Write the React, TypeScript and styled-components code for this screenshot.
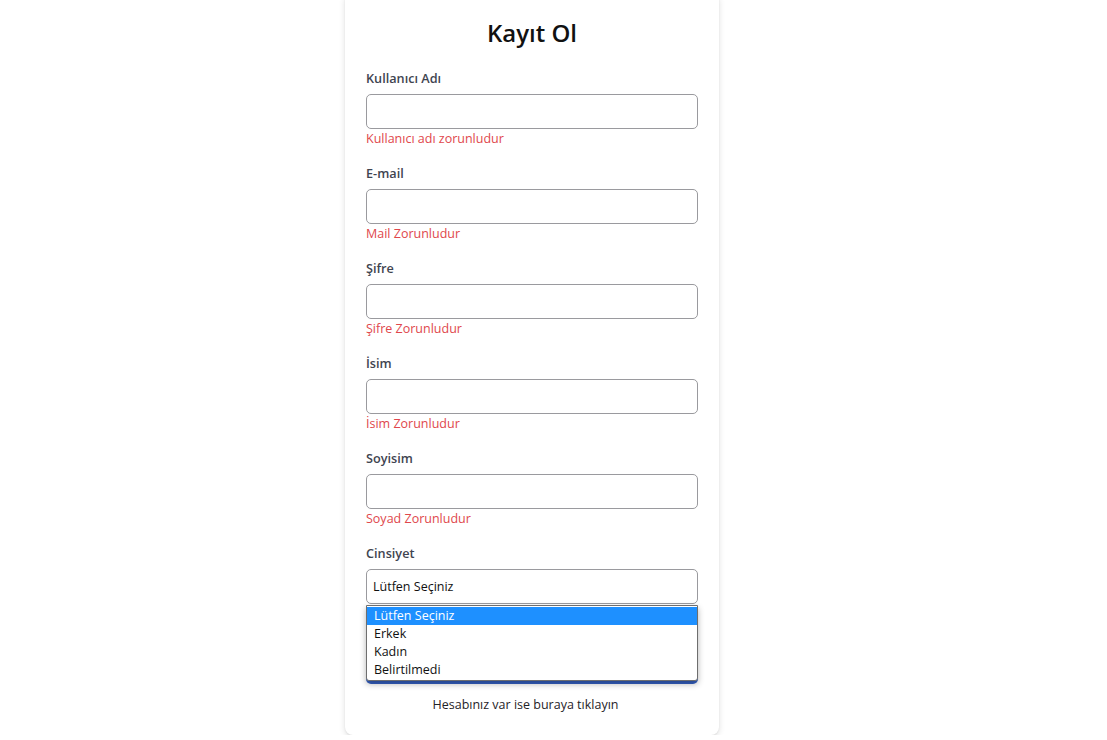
import React from 'react';
import styled, { createGlobalStyle } from 'styled-components';

const GlobalStyle = createGlobalStyle`
  html, body {
    margin: 0;
    padding: 0;
    background: #ffffff;
    font-family: 'Open Sans', 'Noto Sans', sans-serif;
  }
  * {
    box-sizing: border-box;
  }
`;

const fields = [
  { id: 'username', label: 'Kullanıcı Adı', error: 'Kullanıcı adı zorunludur', type: 'text' },
  { id: 'email', label: 'E-mail', error: 'Mail Zorunludur', type: 'email' },
  { id: 'password', label: 'Şifre', error: 'Şifre Zorunludur', type: 'password' },
  { id: 'name', label: 'İsim', error: 'İsim Zorunludur', type: 'text' },
  { id: 'surname', label: 'Soyisim', error: 'Soyad Zorunludur', type: 'text' },
];

const genders = ['Lütfen Seçiniz', 'Erkek', 'Kadın', 'Belirtilmedi'];

function App() {
  return (
    <Page>
      <GlobalStyle />
      <Card>
        <Title>Kayıt Ol</Title>
        {fields.map(f => (
          <Group key={f.id}>
            <Label htmlFor={f.id}>{f.label}</Label>
            <Input id={f.id} type={f.type} />
            <Error>{f.error}</Error>
          </Group>
        ))}
        <Group>
          <Label htmlFor='gender'>Cinsiyet</Label>
          <SelectWrap>
            <Select id='gender' defaultValue={genders[0]}>
              {genders.map(g => (
                <option key={g}>{g}</option>
              ))}
            </Select>
            <OptionList role='listbox'>
              {genders.map((g, i) => (
                <OptionItem key={g} $active={i === 0} role='option' aria-selected={i === 0}>
                  {g}
                </OptionItem>
              ))}
            </OptionList>
          </SelectWrap>
        </Group>
        <SubmitButton type='button'>Kayıt Ol</SubmitButton>
        <LoginLink>Hesabınız var ise buraya tıklayın</LoginLink>
      </Card>
    </Page>
  );
}

export default App;

const Page = styled.div`
  display: flex;
  justify-content: center;
  padding-right: 43px;
`;

const Card = styled.div`
  display: flex;
  flex-direction: column;
  width: 374px;
  margin-top: -7px;
  padding: 24px 21px 20px;
  background: #fff;
  border-radius: 8px;
  box-shadow: 0 2px 6px rgba(0, 0, 0, 0.13), 0 1px 2px rgba(0, 0, 0, 0.06);
`;

const Title = styled.h1`
  margin: 0 0 19px;
  font-size: 24px;
  line-height: 32px;
  font-weight: 600;
  color: #111;
  text-align: center;
`;

const Group = styled.div`
  display: flex;
  flex-direction: column;
  margin-bottom: 14px;
`;

const Label = styled.label`
  font-size: 12.7px;
  line-height: 20px;
  font-weight: 600;
  color: #3f4450;
  margin-bottom: 6px;
`;

const Input = styled.input`
  width: 100%;
  height: 35px;
  border: 1px solid #9a9a9e;
  border-radius: 5px;
  padding: 0 7px;
  font-family: inherit;
  font-size: 12.5px;
  outline: none;
`;

const Error = styled.span`
  font-size: 12.5px;
  line-height: 20px;
  color: #e0474c;
`;

const SelectWrap = styled.div`
  position: relative;
`;

const Select = styled.select`
  width: 100%;
  height: 35px;
  border: 1px solid #9a9a9e;
  border-radius: 5px;
  padding: 0 6px;
  font-family: inherit;
  font-size: 12.5px;
  color: #111;
  background: #fff;
  appearance: none;
  outline: none;
`;

const OptionList = styled.ul`
  position: absolute;
  left: 0;
  right: 0;
  top: 36px;
  z-index: 10;
  margin: 0;
  padding: 1px 0 1px;
  list-style: none;
  background: #fff;
  border: 1px solid #6e6e6e;
  border-radius: 0 0 3px 3px;
  box-shadow: 0 3px 6px rgba(0, 0, 0, 0.3);
`;

const OptionItem = styled.li<{ $active?: boolean }>`
  height: 18px;
  line-height: 18px;
  padding: 0 7px;
  font-size: 12.5px;
  color: ${p => (p.$active ? '#fff' : '#111')};
  background: ${p => (p.$active ? '#1e90ff' : 'transparent')};
`;

const SubmitButton = styled.button`
  display: block;
  width: 100%;
  height: 40px;
  margin-top: 26px;
  border: none;
  border-radius: 5px;
  background: #3561c4;
  color: #fff;
  font-family: inherit;
  font-size: 14px;
  font-weight: 600;
`;

const LoginLink = styled.p`
  margin: 11px 0 0;
  padding-right: 13px;
  font-size: 12.5px;
  line-height: 20px;
  text-align: center;
  color: #1f2328;
  cursor: pointer;
`;
